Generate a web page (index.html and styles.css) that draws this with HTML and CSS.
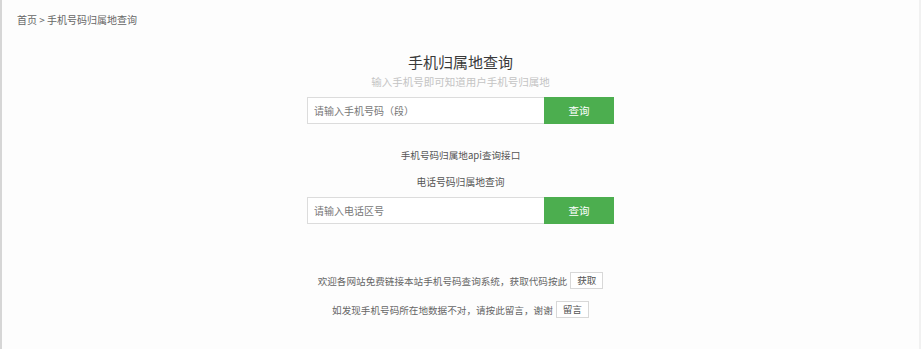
FILE: index.html
```html
<!DOCTYPE html>
<html lang="zh-CN">
<head>
<meta charset="utf-8">
<title>手机归属地查询</title>
<link rel="stylesheet" href="styles.css">
</head>
<body>
<div class="frame">
  <div class="crumb">首页 &gt; 手机号码归属地查询</div>
  <main class="main">
    <h1 class="title">手机归属地查询</h1>
    <p class="sub">输入手机号即可知道用户手机号归属地</p>
    <div class="search">
      <input class="field" type="text" placeholder="请输入手机号码（段）">
      <button class="go">查询</button>
    </div>
    <p class="link">手机号码归属地api查询接口</p>
    <p class="label">电话号码归属地查询</p>
    <div class="search">
      <input class="field" type="text" placeholder="请输入电话区号">
      <button class="go">查询</button>
    </div>
    <p class="note note-first">欢迎各网站免费链接本站手机号码查询系统，获取代码按此<span class="mini">获取</span></p>
    <p class="note">如发现手机号码所在地数据不对，请按此留言，谢谢<span class="mini">留言</span></p>
  </main>
</div>
</body>
</html>
```
FILE: styles.css
```css
html, body {
  margin: 0;
  padding: 0;
  background: #fdfdfd;
  font-family: "Noto Sans CJK SC", "Noto Sans", sans-serif;
}
.frame {
  height: 349px;
  box-sizing: border-box;
  border-left: 2px solid #d6d6d6;
  border-right: 2px solid #f1f1f1;
  overflow: hidden;
}
.crumb {
  padding: 14px 0 0 15px;
  font-size: 10px;
  line-height: 12px;
  color: #666;
}
.main {
  display: flex;
  flex-direction: column;
  align-items: center;
}
.title {
  margin: 26px 0 0;
  font-size: 15px;
  line-height: 20px;
  font-weight: normal;
  color: #3a3a3a;
}
.sub {
  margin: 3px 0 0;
  font-size: 10.5px;
  line-height: 14px;
  color: #c4c4c4;
}
.search {
  display: flex;
  width: 307px;
  height: 27px;
  margin-top: 8px;
}
.field {
  flex: 1;
  min-width: 0;
  box-sizing: border-box;
  height: 27px;
  margin: 0;
  padding: 0 0 0 6px;
  border: 1px solid #dcdcdc;
  border-right: none;
  background: #fff;
  font-family: inherit;
  font-size: 10px;
  color: #666;
  outline: none;
}
.field::placeholder {
  color: #777;
}
.go {
  width: 70px;
  height: 27px;
  margin: 0;
  padding: 0;
  border: none;
  background: #4cae4f;
  color: #fff;
  font-family: inherit;
  font-size: 10.5px;
}
.link {
  margin: 24px 0 0;
  font-size: 9.6px;
  line-height: 14px;
  color: #555;
}
.label {
  margin: 13px 0 0;
  font-size: 9.8px;
  line-height: 14px;
  color: #555;
}
.note {
  display: flex;
  align-items: center;
  margin: 12px 0 0;
  height: 17px;
  font-size: 9.6px;
  color: #666;
}
.note-first {
  margin-top: 48px;
}
.mini {
  box-sizing: border-box;
  height: 17px;
  margin-left: 3px;
  padding: 0 6px;
  border: 1px solid #d8d8d8;
  background: #fff;
  line-height: 15px;
  color: #555;
}
```
